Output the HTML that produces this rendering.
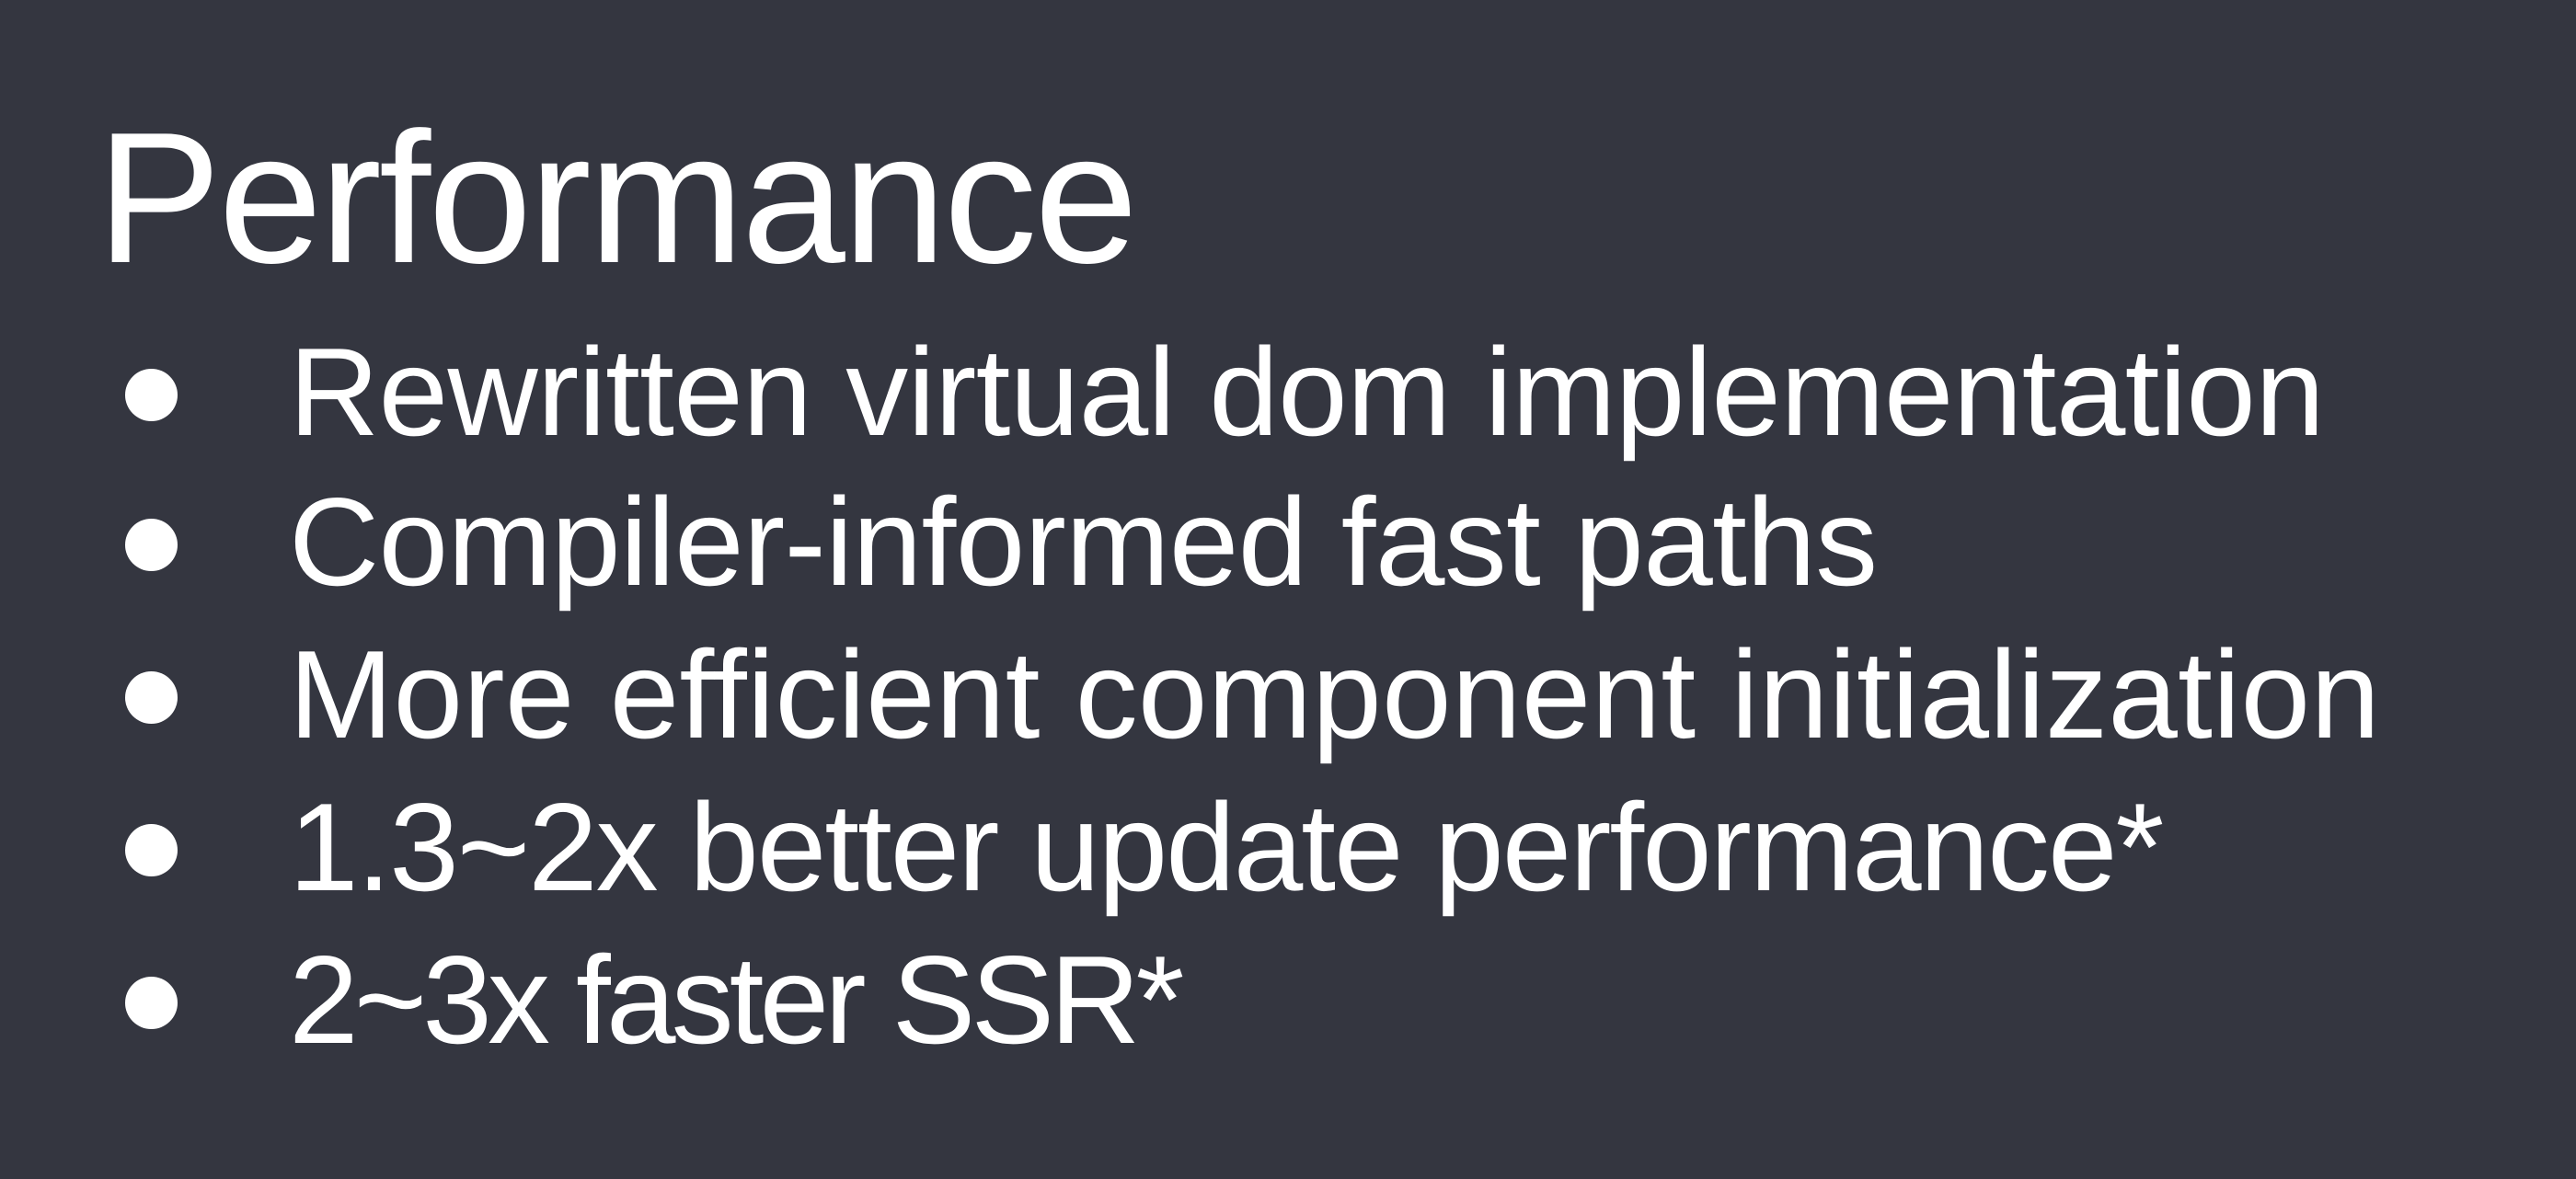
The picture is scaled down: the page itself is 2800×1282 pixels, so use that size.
<!DOCTYPE html>
<html><head><meta charset="utf-8"><style>
html,body{margin:0;padding:0}
body{width:2800px;height:1282px;background:#343640;position:relative;overflow:hidden;font-family:"Liberation Sans",sans-serif;color:#fff}
.t{position:absolute;left:105px;top:114px;font-size:203px;line-height:203px;white-space:nowrap;letter-spacing:-3px}
.b{position:absolute;left:314px;font-size:136px;line-height:136px;white-space:nowrap}
.d{position:absolute;left:136px;width:57px;height:57px;border-radius:50%;background:#fff}
</style></head><body>
<div class="t">Performance</div>
<div class="d" style="top:401px"></div><div class="b" style="top:358px;letter-spacing:-0.7px">Rewritten virtual dom implementation</div>
<div class="d" style="top:564px"></div><div class="b" style="top:521px;letter-spacing:-0.7px">Compiler-informed fast paths</div>
<div class="d" style="top:730px"></div><div class="b" style="top:687px;letter-spacing:0.2px">More efficient component initialization</div>
<div class="d" style="top:896px"></div><div class="b" style="top:853px;letter-spacing:-2.1px">1.3~2x better update performance*</div>
<div class="d" style="top:1062px"></div><div class="b" style="top:1019px;letter-spacing:-4.9px">2~3x faster SSR*</div>
</body></html>
